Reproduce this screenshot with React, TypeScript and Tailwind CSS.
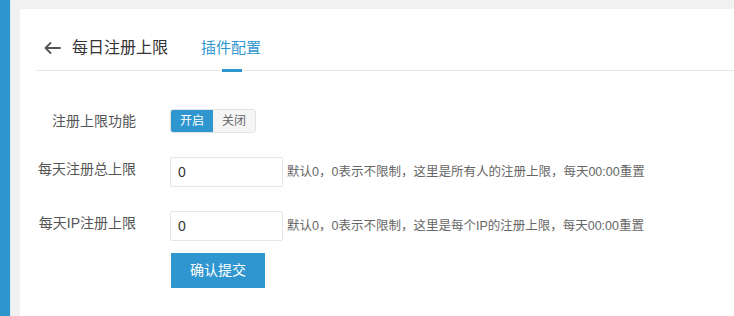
import React, { useState } from 'react';

const font = { fontFamily: '"Liberation Sans", "Noto Sans CJK SC", sans-serif' };

function Row({ label, children }: { label: string; children: React.ReactNode }) {
  return (
    <div className="flex items-start">
      <div className="w-[100px] shrink-0 text-right text-[14px] leading-[24px] text-[#555]">{label}</div>
      <div className="ml-[34px] flex items-center">{children}</div>
    </div>
  );
}

export default function App() {
  const [enabled, setEnabled] = useState(true);
  const [total, setTotal] = useState('0');
  const [perIp, setPerIp] = useState('0');

  return (
    <div className="flex h-[316px] w-[734px] overflow-hidden bg-[#f1f1f1]" style={font}>
      <div className="w-[10px] shrink-0 bg-[#2f95cd]" />
      <div className="w-[1px] shrink-0 bg-[#dbeaf3]" />
      <div className="flex flex-1 flex-col pl-[9px] pt-[9px]">
        <div className="flex-1 bg-white pl-[16px]">
          {/* header tabs */}
          <div className="flex h-[62px] items-center border-b border-[#e8e8e8] pt-[17px]">
            <button className="ml-[7px] flex h-[20px] w-[18px] items-center justify-center text-[#555]">
              <svg width="17" height="12" viewBox="0 0 17 12" fill="none" stroke="currentColor" strokeWidth="1.8" strokeLinecap="round" strokeLinejoin="round">
                <path d="M16 6H1.5M6.5 1L1.5 6l5 5" />
              </svg>
            </button>
            <span className="ml-[11px] text-[16px] text-[#333]">每日注册上限</span>
            <div className="relative ml-[33px] h-full">
              <div className="flex h-full items-center text-[15px] text-[#3096cf]">插件配置</div>
              <div className="absolute bottom-[-2px] left-[21px] h-[3px] w-[20px] bg-[#3096cf]" />
            </div>
          </div>

          {/* form */}
          <div className="mt-[38px] flex flex-col">
            <Row label="注册上限功能">
              <div className="flex h-[24px] overflow-hidden rounded-[3px] border border-[#e2e2e2] text-[12px]">
                <button
                  onClick={() => setEnabled(true)}
                  className={enabled ? 'w-[42px] bg-[#3096cf] text-white' : 'w-[42px] bg-[#f5f5f5] text-[#666]'}
                >
                  开启
                </button>
                <button
                  onClick={() => setEnabled(false)}
                  className={!enabled ? 'w-[42px] bg-[#3096cf] text-white' : 'w-[42px] bg-[#f5f5f5] text-[#666]'}
                >
                  关闭
                </button>
              </div>
            </Row>

            <div className="mt-[24px]">
              <Row label="每天注册总上限">
                <input
                  value={total}
                  onChange={(e) => setTotal(e.target.value)}
                  className="h-[30px] w-[113px] rounded-[2px] border border-[#e6e6e6] px-[7px] text-[14px] text-[#333] outline-none"
                />
                <span className="ml-[4px] text-[12.5px] text-[#666]">默认0，0表示不限制，这里是所有人的注册上限，每天00:00重置</span>
              </Row>
            </div>

            <div className="mt-[24px]">
              <Row label="每天IP注册上限">
                <input
                  value={perIp}
                  onChange={(e) => setPerIp(e.target.value)}
                  className="h-[30px] w-[113px] rounded-[2px] border border-[#e6e6e6] px-[7px] text-[14px] text-[#333] outline-none"
                />
                <span className="ml-[4px] text-[12.5px] text-[#666]">默认0，0表示不限制，这里是每个IP的注册上限，每天00:00重置</span>
              </Row>
            </div>

            <div className="mt-[12px] pl-[135px]">
              <button className="h-[35px] w-[94px] bg-[#3096cf] text-[14px] text-white">确认提交</button>
            </div>
          </div>
        </div>
      </div>
    </div>
  );
}
